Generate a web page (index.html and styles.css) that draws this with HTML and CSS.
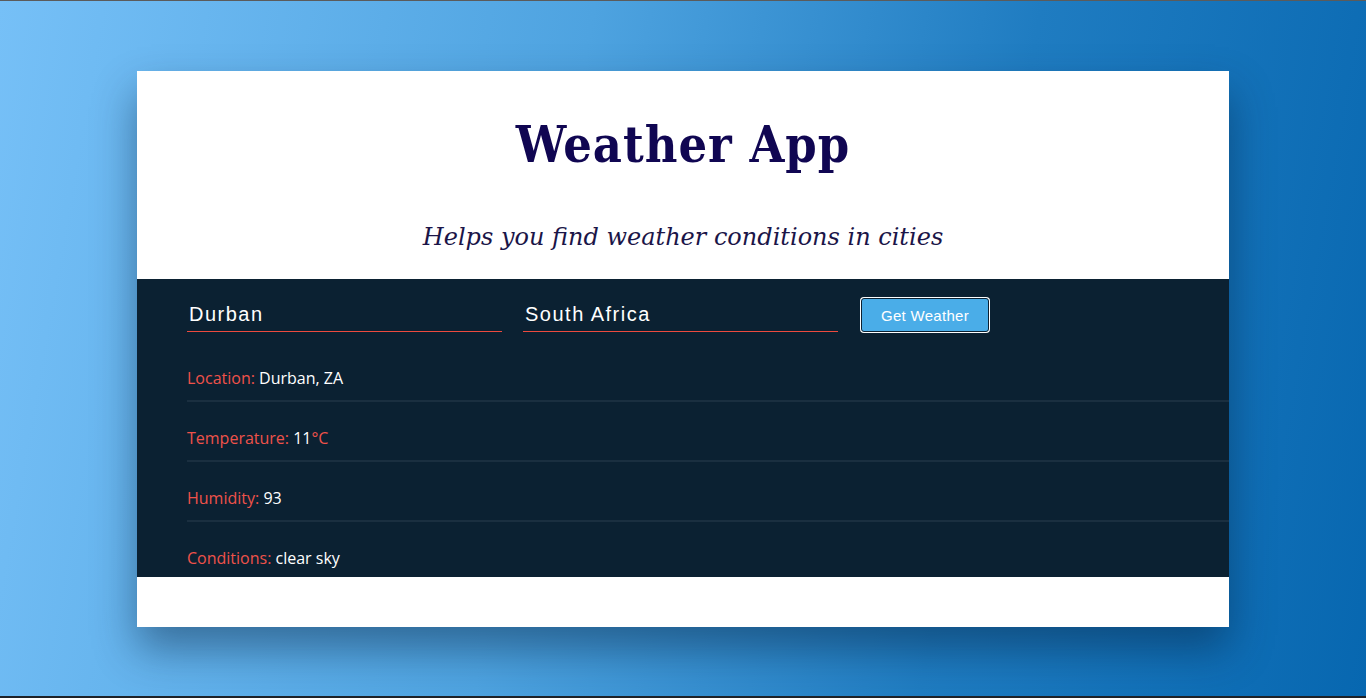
FILE: index.html
```html
<!DOCTYPE html>
<html lang="en">
<head>
<meta charset="utf-8">
<title>Weather App</title>
<link rel="stylesheet" href="styles.css">
</head>
<body>
<div class="topline"></div>
<main class="stage">
  <section class="card">
    <header class="card-head">
      <h1 class="title">Weather App</h1>
      <p class="subtitle">Helps you find weather conditions in cities</p>
    </header>
    <div class="panel">
      <form class="search">
        <label class="field-wrap"><input class="field" type="text" value="Durban"></label>
        <label class="field-wrap"><input class="field" type="text" value="South Africa"></label>
        <button class="btn" type="button">Get Weather</button>
      </form>
      <ul class="results">
        <li class="row"><span class="label">Location:</span> <span class="value">Durban, ZA</span></li>
        <li class="row"><span class="label">Temperature:</span> <span class="value">11</span><span class="label">°C</span></li>
        <li class="row"><span class="label">Humidity:</span> <span class="value">93</span></li>
        <li class="row last"><span class="label">Conditions:</span> <span class="value">clear sky</span></li>
      </ul>
    </div>
    <div class="card-foot"></div>
  </section>
</main>
<div class="taskbar"></div>
</body>
</html>
```

FILE: styles.css
```css
* { box-sizing: border-box; }
html, body { margin: 0; padding: 0; height: 100%; }
body {
  display: flex;
  flex-direction: column;
  background: linear-gradient(100deg, #76c0f7 0%, #4ea3e0 40%, #1f7cc1 70%, #0767b0 100%);
  overflow: hidden;
}
.topline { height: 1px; background: #5b5b5b; flex: none; }
.taskbar { height: 2px; background: #1e2228; flex: none; }
.stage {
  flex: 1;
  display: flex;
  justify-content: center;
  align-items: flex-start;
  padding-top: 70px;
}
.card {
  width: 1092px;
  background: #fff;
  box-shadow: 0 22px 40px rgba(5, 30, 60, 0.45);
}
.card-head {
  height: 208px;
  text-align: center;
  padding-top: 40px;
}
.title {
  margin: 0;
  font-family: "DejaVu Serif Condensed", "DejaVu Serif", serif;
  font-stretch: condensed;
  font-weight: bold;
  font-size: 50px;
  line-height: 68px;
  letter-spacing: 1px;
  color: #100652;
}
.subtitle {
  margin: 43px 0 0;
  font-family: "DejaVu Serif", "Liberation Serif", serif;
  font-style: italic;
  font-size: 24px;
  line-height: 30px;
  color: #1b1548;
}
.panel {
  background: #0b2132;
  height: 298px;
}
.search {
  display: flex;
  align-items: center;
  gap: 21px;
  height: 63px;
  padding: 18px 0 9px 50px;
}
.field-wrap {
  display: block;
  width: 315px;
  height: 34px;
  border-bottom: 1px solid #ec4a3e;
}
.field {
  display: block;
  width: 100%;
  height: 33px;
  margin: 0;
  background: transparent;
  border: none;
  color: #fff;
  font-family: "Liberation Sans", Arial, sans-serif;
  font-size: 20px;
  letter-spacing: 1.5px;
  padding: 0 2px;
  outline: none;
}
.btn {
  margin-left: 2px;
  width: 128px;
  height: 34px;
  background: #4aade8;
  color: #fff;
  border: 1px solid #0b2132;
  border-radius: 3px;
  box-shadow: 0 0 0 1px #fff;
  font-family: "Liberation Sans", Arial, sans-serif;
  font-size: 15px;
  letter-spacing: 0.3px;
  padding: 0;
}
.results {
  list-style: none;
  margin: 0 0 0 50px;
  padding: 0;
}
.row {
  height: 60px;
  padding-top: 26px;
  line-height: 20px;
  border-bottom: 2px solid #1a2f40;
  font-family: "Open Sans", "Noto Sans", sans-serif;
  font-size: 16px;
}
.row.last { border-bottom: none; height: 55px; }
.label { color: #ef524a; }
.value { color: #fff; }
.card-foot { height: 50px; }
```
